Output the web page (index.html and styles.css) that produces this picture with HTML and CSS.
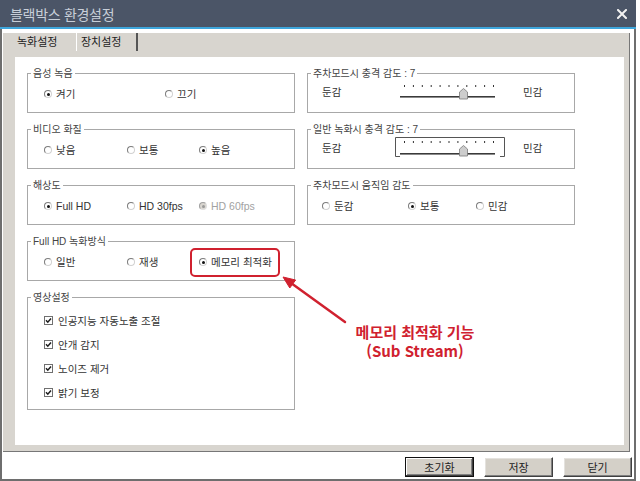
FILE: index.html
```html
<!DOCTYPE html>
<html lang="ko">
<head>
<meta charset="utf-8">
<title>블랙박스 환경설정</title>
<link rel="stylesheet" href="styles.css">
</head>
<body>
<div class="window">
  <div class="titlebar">
    <span class="title">블랙박스 환경설정</span>
    <svg class="close" width="10" height="10" viewBox="0 0 10 10"><path d="M1 1 L9 9 M9 1 L1 9" stroke="#f2f2f2" stroke-width="2" stroke-linecap="square"/></svg>
  </div>
  <div class="client">
    <div class="tabframe">
      <div class="tabs">
        <div class="tab active">녹화설정</div>
        <div class="tab">장치설정</div>
      </div>
      <div class="panel">
        <div class="col">
          <fieldset class="group">
            <legend>음성 녹음</legend>
            <div class="row cols-2">
              <label class="opt"><span class="radio on"></span>켜기</label>
              <label class="opt"><span class="radio"></span>끄기</label>
            </div>
          </fieldset>
          <fieldset class="group">
            <legend>비디오 화질</legend>
            <div class="row cols-3">
              <label class="opt"><span class="radio"></span>낮음</label>
              <label class="opt"><span class="radio"></span>보통</label>
              <label class="opt"><span class="radio on"></span>높음</label>
            </div>
          </fieldset>
          <fieldset class="group">
            <legend>해상도</legend>
            <div class="row cols-3">
              <label class="opt"><span class="radio on"></span>Full HD</label>
              <label class="opt"><span class="radio"></span>HD 30fps</label>
              <label class="opt disabled"><span class="radio"></span>HD 60fps</label>
            </div>
          </fieldset>
          <fieldset class="group">
            <legend>Full HD 녹화방식</legend>
            <div class="row cols-3">
              <label class="opt"><span class="radio"></span>일반</label>
              <label class="opt"><span class="radio"></span>재생</label>
              <label class="opt highlight"><span class="radio on"></span>메모리 최적화</label>
            </div>
          </fieldset>
          <fieldset class="group checks">
            <legend>영상설정</legend>
            <label class="check"><svg class="box" width="9" height="9" viewBox="0 0 9 9"><rect x="0.5" y="0.5" width="8" height="8" fill="#fff" stroke="#707070"/><path d="M2 4.2 L3.8 6.2 L7 2.4" fill="none" stroke="#1e1e1e" stroke-width="1.5"/></svg>인공지능 자동노출 조절</label>
            <label class="check"><svg class="box" width="9" height="9" viewBox="0 0 9 9"><rect x="0.5" y="0.5" width="8" height="8" fill="#fff" stroke="#707070"/><path d="M2 4.2 L3.8 6.2 L7 2.4" fill="none" stroke="#1e1e1e" stroke-width="1.5"/></svg>안개 감지</label>
            <label class="check"><svg class="box" width="9" height="9" viewBox="0 0 9 9"><rect x="0.5" y="0.5" width="8" height="8" fill="#fff" stroke="#707070"/><path d="M2 4.2 L3.8 6.2 L7 2.4" fill="none" stroke="#1e1e1e" stroke-width="1.5"/></svg>노이즈 제거</label>
            <label class="check"><svg class="box" width="9" height="9" viewBox="0 0 9 9"><rect x="0.5" y="0.5" width="8" height="8" fill="#fff" stroke="#707070"/><path d="M2 4.2 L3.8 6.2 L7 2.4" fill="none" stroke="#1e1e1e" stroke-width="1.5"/></svg>밝기 보정</label>
          </fieldset>
        </div>
        <div class="col">
          <fieldset class="group slidergroup">
            <legend>주차모드시 충격 감도 : 7</legend>
            <div class="row sliderrow">
              <span>둔감</span>
              <svg class="slider" width="110" height="20" viewBox="0 0 110 20">
                <g fill="#333">
                  <rect x="9" y="4" width="1" height="2"/><rect x="17.9" y="4" width="1" height="2"/><rect x="26.8" y="4" width="1" height="2"/><rect x="35.7" y="4" width="1" height="2"/><rect x="44.6" y="4" width="1" height="2"/><rect x="53.5" y="4" width="1" height="2"/><rect x="62.4" y="4" width="1" height="2"/><rect x="71.3" y="4" width="1" height="2"/><rect x="80.2" y="4" width="1" height="2"/><rect x="89.1" y="4" width="1" height="2"/><rect x="98" y="4" width="1" height="2"/>
                </g>
                <rect x="5" y="15" width="95" height="1" fill="#3a3a3a"/>
                <rect x="5" y="16" width="95" height="1" fill="#8a8a8a"/>
                <path d="M64.5 11 L68.5 7.5 L72.5 11 L72.5 18 L64.5 18 Z" fill="#cdcdcd" stroke="#7a7a7a" stroke-width="0.8"/>
              </svg>
              <span>민감</span>
            </div>
          </fieldset>
          <fieldset class="group slidergroup">
            <legend>일반 녹화시 충격 감도 : 7</legend>
            <div class="row sliderrow">
              <span>둔감</span>
              <svg class="slider" width="110" height="20" viewBox="0 0 110 20">
                <path d="M0.5 4 L0.5 0.5 L109.5 0.5 L109.5 4 M0.5 4 L0.5 19.5 L5 19.5 M109.5 4 L109.5 19.5 L105 19.5" fill="none" stroke="#555" stroke-width="1"/>
                <g fill="#333">
                  <rect x="9" y="4" width="1" height="2"/><rect x="17.9" y="4" width="1" height="2"/><rect x="26.8" y="4" width="1" height="2"/><rect x="35.7" y="4" width="1" height="2"/><rect x="44.6" y="4" width="1" height="2"/><rect x="53.5" y="4" width="1" height="2"/><rect x="62.4" y="4" width="1" height="2"/><rect x="71.3" y="4" width="1" height="2"/><rect x="80.2" y="4" width="1" height="2"/><rect x="89.1" y="4" width="1" height="2"/><rect x="98" y="4" width="1" height="2"/>
                </g>
                <rect x="5" y="16" width="95" height="1" fill="#3a3a3a"/>
                <rect x="5" y="17" width="95" height="1" fill="#8a8a8a"/>
                <path d="M64.5 12 L68.5 8.5 L72.5 12 L72.5 19 L64.5 19 Z" fill="#cdcdcd" stroke="#7a7a7a" stroke-width="0.8"/>
              </svg>
              <span>민감</span>
            </div>
          </fieldset>
          <fieldset class="group">
            <legend>주차모드시 움직임 감도</legend>
            <div class="row cols-3r">
              <label class="opt"><span class="radio"></span>둔감</label>
              <label class="opt"><span class="radio on"></span>보통</label>
              <label class="opt"><span class="radio"></span>민감</label>
            </div>
          </fieldset>
        </div>
      </div>
    </div>
    <div class="buttons">
      <button class="btn default">초기화</button>
      <button class="btn">저장</button>
      <button class="btn">닫기</button>
    </div>
  </div>
</div>
<svg class="arrow" width="640" height="481" viewBox="0 0 640 481">
  <line x1="291" y1="283" x2="345" y2="322" stroke="#d0212f" stroke-width="2.5" stroke-linecap="round"/>
  <path d="M283 277 L289.8 288 L295.6 280 Z" fill="#d0212f" stroke="#d0212f" stroke-width="1" stroke-linejoin="round"/>
</svg>
<div class="callout">메모리 최적화 기능<br>(Sub Stream)</div>
</body>
</html>
```

FILE: styles.css
```css
* { box-sizing: border-box; }
html, body { margin: 0; padding: 0; background: #fff; }
body {
  position: relative;
  width: 640px;
  height: 481px;
  overflow: hidden;
  font-family: "Liberation Sans", "Noto Sans CJK KR", sans-serif;
  font-size: 10.5px;
  color: #333;
}
.window {
  width: 636px;
  height: 481px;
  border: 2px solid #6e6e6e;
  border-top: 0;
  display: flex;
  flex-direction: column;
}
.titlebar {
  height: 29px;
  margin: 0 -2px;
  background: #4b5567;
  border-bottom: 2px solid #3ea6dc;
  display: flex;
  align-items: center;
  justify-content: space-between;
  padding: 0 9px 0 10px;
}
.title {
  font-family: "Noto Sans CJK KR", sans-serif;
  font-size: 14px;
  color: #c8cfd9;
  letter-spacing: -0.3px;
}
.client {
  flex: 1;
  display: flex;
  flex-direction: column;
  padding-top: 4px;
}
.tabframe {
  margin: 0 4px 0 1px;
  background: #d8d5cf;
  border-right: 1px solid #777;
  border-bottom: 1px solid #777;
  display: flex;
  flex-direction: column;
}
.tabs {
  display: flex;
  height: 18px;
}
.tab {
  line-height: 18px;
  font-size: 11px;
  color: #222;
}
.tab.active {
  width: 73px;
  padding-left: 14px;
}
.tab:not(.active) {
  width: 62px;
  padding-left: 4px;
  border-left: 1px solid #fff;
  border-right: 2px solid #555;
}
.panel {
  margin: 6px 5px 6px 12px;
  height: 388px;
  background: #fff;
  display: grid;
  grid-template-columns: 268px 268px;
  column-gap: 12px;
  align-items: start;
  padding: 10px 0 0 12px;
}
.col {
  display: flex;
  flex-direction: column;
  gap: 10px;
}
.group {
  margin: 0;
  min-width: 0;
  border: 1px solid #a8a8a8;
  padding: 5px 0 9px 0;
}
.group legend {
  margin-left: 3px;
  padding: 0 2px;
  font-size: 10px;
  line-height: 13px;
  color: #444;
}
.row {
  display: grid;
  height: 18px;
  align-items: center;
  justify-items: start;
  padding-left: 16px;
}
.cols-2 { grid-template-columns: 121px auto; }
.cols-3 { grid-template-columns: 83px 72px auto; }
.cols-3r { grid-template-columns: 86px 68px auto; padding-left: 14px; }
.opt {
  display: inline-flex;
  align-items: center;
  gap: 4px;
  line-height: 18px;
  white-space: nowrap;
}
.radio {
  width: 8px;
  height: 8px;
  border-radius: 50%;
  border: 1px solid;
  border-color: #7c7c7c #d2d2d2 #d2d2d2 #7c7c7c;
  background: #fff;
  display: inline-flex;
  align-items: center;
  justify-content: center;
}
.radio.on::after {
  content: "";
  width: 3px;
  height: 3px;
  border-radius: 50%;
  background: #111;
}
.opt.disabled { color: #a2a2a2; }
.opt.disabled .radio { background: #d9d6d0; border-color: #a0a0a0 #e0e0e0 #e0e0e0 #a0a0a0; }
.opt.disabled .radio::after {
  content: "";
  width: 3px;
  height: 3px;
  border-radius: 50%;
  background: #9a9a9a;
}
.highlight { position: relative; }
.highlight::after {
  content: "";
  position: absolute;
  left: -9px;
  right: -8px;
  top: -5px;
  bottom: -6px;
  border: 2px solid #d0212f;
  border-radius: 5px;
}
.checks {
  padding: 8px 0 9px 0;
  display: flex;
  flex-direction: column;
  gap: 8px;
}
.check {
  display: flex;
  align-items: center;
  gap: 5px;
  height: 16px;
  margin-left: 16px;
}
.box { flex: none; }
.slidergroup { padding: 1px 0 11px 0; }
.sliderrow {
  height: 20px;
  padding-left: 14px;
  grid-template-columns: 73px 128px auto;
}
.slider { display: block; }
.buttons {
  display: flex;
  justify-content: flex-end;
  gap: 10px;
  margin-top: 5px;
  padding-right: 2px;
}
.btn {
  width: 69px;
  height: 20px;
  padding: 0;
  font-family: "Liberation Sans", "Noto Sans CJK KR", sans-serif;
  font-size: 11px;
  color: #222;
  background: #d4d0c8;
  border: 1px solid;
  border-color: #fff #404040 #404040 #fff;
  box-shadow: inset -1px -1px #808080, inset 1px 1px #e4e2de;
}
.btn.default {
  border: 1px solid #111;
  box-shadow: inset -1px -1px #404040, inset 1px 1px #fff, inset -2px -2px #808080;
}
.arrow {
  position: absolute;
  left: 0;
  top: 0;
  pointer-events: none;
}
.callout {
  position: absolute;
  left: 339px;
  top: 322px;
  width: 152px;
  text-align: center;
  font-family: "Noto Sans CJK KR", sans-serif;
  font-weight: bold;
  font-size: 15px;
  line-height: 19px;
  color: #d0212f;
}
```
